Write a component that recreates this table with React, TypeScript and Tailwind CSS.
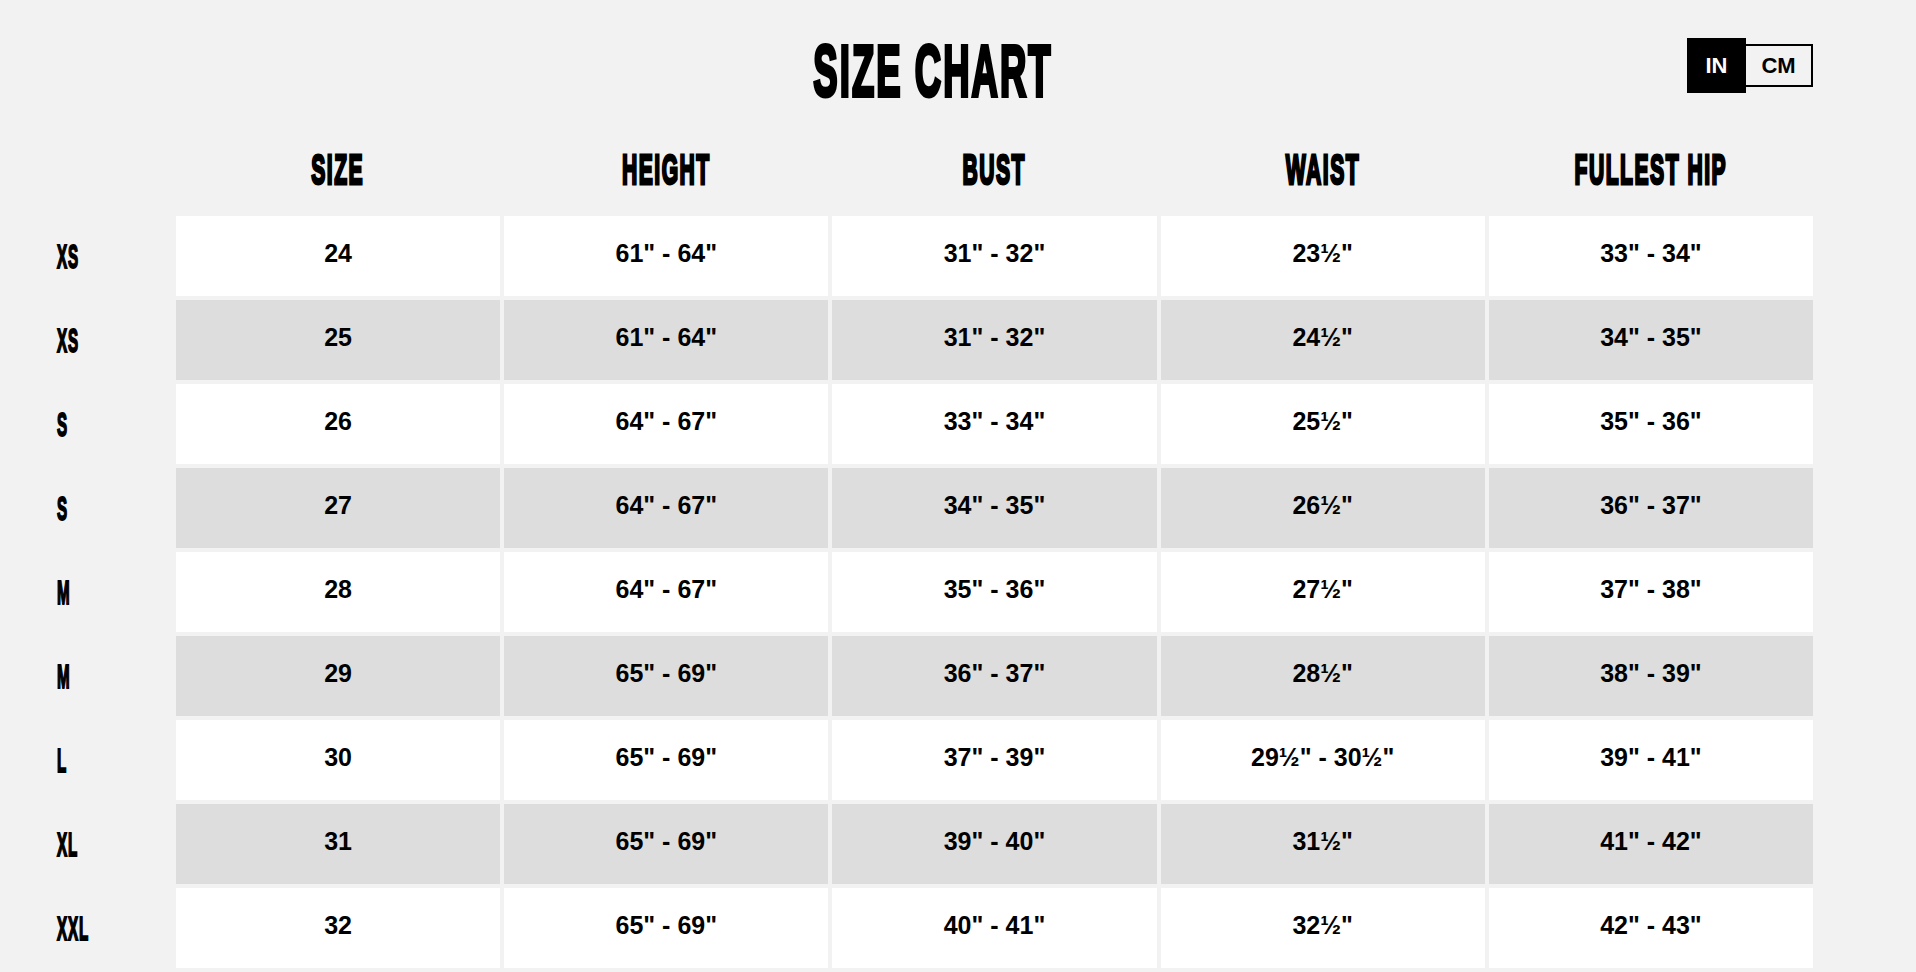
import React, { useState } from "react";

type Row = {
  label: string;
  size: string;
  height: string;
  bust: string;
  waist: string;
  hip: string;
};

const rows: Row[] = [
  { label: "XS", size: "24", height: '61" - 64"', bust: '31" - 32"', waist: '23½"', hip: '33" - 34"' },
  { label: "XS", size: "25", height: '61" - 64"', bust: '31" - 32"', waist: '24½"', hip: '34" - 35"' },
  { label: "S", size: "26", height: '64" - 67"', bust: '33" - 34"', waist: '25½"', hip: '35" - 36"' },
  { label: "S", size: "27", height: '64" - 67"', bust: '34" - 35"', waist: '26½"', hip: '36" - 37"' },
  { label: "M", size: "28", height: '64" - 67"', bust: '35" - 36"', waist: '27½"', hip: '37" - 38"' },
  { label: "M", size: "29", height: '65" - 69"', bust: '36" - 37"', waist: '28½"', hip: '38" - 39"' },
  { label: "L", size: "30", height: '65" - 69"', bust: '37" - 39"', waist: '29½" - 30½"', hip: '39" - 41"' },
  { label: "XL", size: "31", height: '65" - 69"', bust: '39" - 40"', waist: '31½"', hip: '41" - 42"' },
  { label: "XXL", size: "32", height: '65" - 69"', bust: '40" - 41"', waist: '32½"', hip: '42" - 43"' },
];

const headers = ["SIZE", "HEIGHT", "BUST", "WAIST", "FULLEST HIP"];

const App: React.FC = () => {
  const [unit, setUnit] = useState<"IN" | "CM">("IN");

  return (
    <div className="min-h-screen w-full bg-[#f2f2f2] font-['Liberation_Sans',Arial,sans-serif] text-black">
      <div className="w-[1813px]">
        {/* TITLE + UNIT TOGGLE */}
        <div className="flex h-[128px] items-start">
          <div className="w-[633px]" />
          <div className="mt-[35px] flex w-[600px] justify-center">
            <span className="inline-block whitespace-nowrap text-[72px] font-bold leading-none tracking-[4px] [transform:scaleX(0.507)] [-webkit-text-stroke:4px_black]">
              SIZE CHART
            </span>
          </div>
          <div className="flex-1" />
          <div className="mt-[38px] flex items-center">
            <button
              onClick={() => setUnit("IN")}
              className={
                unit === "IN"
                  ? "flex h-[55px] w-[59px] items-center justify-center bg-black text-[22px] font-bold text-white"
                  : "flex h-[43px] w-[59px] items-center justify-center border-2 border-r-0 border-black text-[22px] font-bold text-black"
              }
            >
              IN
            </button>
            <button
              onClick={() => setUnit("CM")}
              className={
                unit === "CM"
                  ? "flex h-[55px] w-[67px] items-center justify-center bg-black text-[22px] font-bold text-white"
                  : "flex h-[43px] w-[67px] items-center justify-center border-2 border-l-0 border-black text-[22px] font-bold text-black"
              }
            >
              CM
            </button>
          </div>
        </div>

        {/* TABLE */}
        <div className="grid grid-cols-[172px_repeat(5,minmax(0,1fr))] gap-1">
          <div className="h-[84px]" />
          {headers.map((h) => (
            <div key={h} className="flex h-[84px] items-center justify-center">
              <span className="inline-block whitespace-nowrap text-[42px] font-bold leading-none tracking-[3px] [transform:scaleX(0.503)] [-webkit-text-stroke:3px_black]">
                {h}
              </span>
            </div>
          ))}

          {rows.map((r, i) => {
            const cell =
              i % 2 === 0
                ? "flex h-[80px] items-center justify-center bg-white pb-[5px] text-[25px] font-bold leading-none"
                : "flex h-[80px] items-center justify-center bg-[#dddddd] pb-[5px] text-[25px] font-bold leading-none";
            return (
              <React.Fragment key={i}>
                <div className="flex h-[80px] items-center pl-[57px]">
                  <span className="inline-block origin-left whitespace-nowrap text-[33px] font-bold leading-none tracking-[2px] [transform:scaleX(0.46)] [-webkit-text-stroke:2px_black]">
                    {r.label}
                  </span>
                </div>
                <div className={cell}>{r.size}</div>
                <div className={cell}>{r.height}</div>
                <div className={cell}>{r.bust}</div>
                <div className={cell}>{r.waist}</div>
                <div className={cell}>{r.hip}</div>
              </React.Fragment>
            );
          })}
        </div>
      </div>
    </div>
  );
};

export default App;
